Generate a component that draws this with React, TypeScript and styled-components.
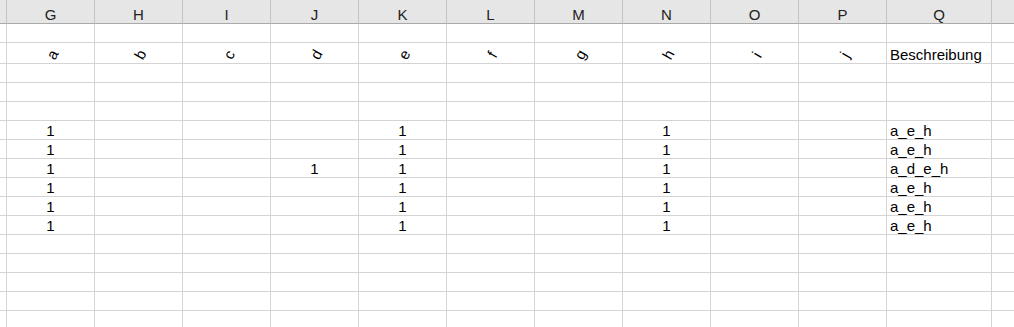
import React from "react";
import styled, { createGlobalStyle } from "styled-components";

const GlobalStyle = createGlobalStyle`
  html, body {
    margin: 0;
    padding: 0;
    background: #ffffff;
    overflow: hidden;
  }
  body {
    font-family: "Liberation Sans", Arial, sans-serif;
    font-size: 15px;
    color: #000000;
  }
`;

const COLS = ["G", "H", "I", "J", "K", "L", "M", "N", "O", "P", "Q"];
const LETTERS = ["a", "b", "c", "d", "e", "f", "g", "h", "i", "j"];

const Sheet = styled.div`
  display: grid;
  grid-template-columns: 7px repeat(10, 88px) 105px 1fr;
  width: 1014px;
  height: 327px;
  overflow: hidden;
  align-content: start;
`;

const HeadCell = styled.div<{ $edge?: boolean }>`
  box-sizing: border-box;
  height: 24px;
  background: #e6e6e6;
  border-bottom: 1px solid #a9a9a9;
  border-right: ${(p) => (p.$edge ? "none" : "1px solid #c4c4c4")};
  display: flex;
  justify-content: center;
  padding-top: 6px;
  line-height: 17px;
  color: #222222;
`;

const Cell = styled.div<{ $h: number; $align?: "center" | "left"; $edge?: boolean }>`
  box-sizing: border-box;
  height: ${(p) => p.$h}px;
  border-bottom: 1px solid #d4d4d4;
  border-right: ${(p) => (p.$edge ? "none" : "1px solid #d4d4d4")};
  display: flex;
  align-items: flex-end;
  justify-content: ${(p) => (p.$align === "left" ? "flex-start" : "center")};
  padding-left: ${(p) => (p.$align === "left" ? "3px" : "0")};
  line-height: 17px;
  white-space: nowrap;
  overflow: visible;
`;

const TiltCell = styled(Cell)`
  align-items: center;
  padding-left: 4px;
  padding-top: 2px;
`;

const Tilted = styled.span`
  display: inline-block;
  transform: rotate(-60deg);
  line-height: 15px;
`;

type Row = { h: number; values?: Record<string, string>; tilted?: boolean };

const dataRow = (extra: Record<string, string> = {}, desc = "a_e_h"): Row => ({
  h: 19,
  values: { G: "1", K: "1", N: "1", Q: desc, ...extra },
});

const ROWS: Row[] = [
  { h: 19 },
  { h: 21, tilted: true },
  { h: 19 },
  { h: 19 },
  { h: 19 },
  dataRow(),
  dataRow(),
  dataRow({ J: "1" }, "a_d_e_h"),
  dataRow(),
  dataRow(),
  dataRow(),
  { h: 19 },
  { h: 19 },
  { h: 19 },
  { h: 19 },
  { h: 19 },
];

export default function App() {
  return (
    <>
      <GlobalStyle />
      <Sheet>
        <HeadCell />
        {COLS.map((c) => (
          <HeadCell key={c}>{c}</HeadCell>
        ))}
        <HeadCell $edge />

        {ROWS.map((row, r) => (
          <React.Fragment key={r}>
            <Cell $h={row.h} />
            {COLS.map((c, i) => {
              if (row.tilted) {
                if (c === "Q") {
                  return (
                    <Cell key={c} $h={row.h} $align="left">
                      Beschreibung
                    </Cell>
                  );
                }
                return (
                  <TiltCell key={c} $h={row.h}>
                    <Tilted>{LETTERS[i]}</Tilted>
                  </TiltCell>
                );
              }
              const v = row.values?.[c] ?? "";
              return (
                <Cell key={c} $h={row.h} $align={c === "Q" ? "left" : "center"}>
                  {v}
                </Cell>
              );
            })}
            <Cell $h={row.h} $edge />
          </React.Fragment>
        ))}
      </Sheet>
    </>
  );
}
